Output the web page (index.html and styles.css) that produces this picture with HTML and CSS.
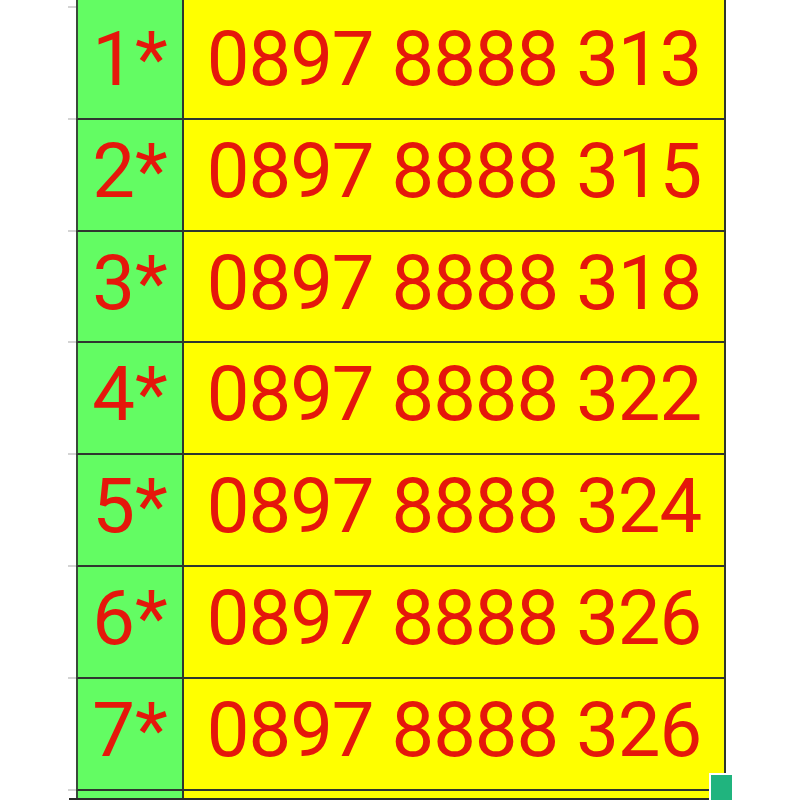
FILE: index.html
```html
<!DOCTYPE html>
<html>
<head>
<meta charset="utf-8">
<link rel="stylesheet" href="styles.css">
</head>
<body>
<div class="page">
  <div class="sheet">
    <div class="row stub-top"><div class="tick"></div><div class="num"></div><div class="phone"></div></div>
    <div class="row"><div class="tick"></div><div class="num">1*</div><div class="phone">0897 8888 313</div></div>
    <div class="row"><div class="tick"></div><div class="num">2*</div><div class="phone">0897 8888 315</div></div>
    <div class="row"><div class="tick"></div><div class="num">3*</div><div class="phone">0897 8888 318</div></div>
    <div class="row"><div class="tick"></div><div class="num">4*</div><div class="phone">0897 8888 322</div></div>
    <div class="row"><div class="tick"></div><div class="num">5*</div><div class="phone">0897 8888 324</div></div>
    <div class="row"><div class="tick"></div><div class="num">6*</div><div class="phone">0897 8888 326</div></div>
    <div class="row"><div class="tick"></div><div class="num">7*</div><div class="phone">0897 8888 326</div></div>
    <div class="row stub-bottom"><div class="tick"></div><div class="num"></div><div class="phone"></div></div>
    <div class="edge"></div>
  </div>
  <div class="handle"></div>
</div>
</body>
</html>
```

FILE: styles.css
```css
* { box-sizing: border-box; }
html, body { margin: 0; padding: 0; background: #ffffff; }
.page {
  position: relative;
  width: 800px;
  height: 800px;
  overflow: hidden;
  background: #ffffff;
}
.sheet {
  margin-left: 68px;
  display: flex;
  flex-direction: column;
}
.row {
  display: flex;
  height: 111.8px;
}
.row.stub-top { height: 8px; }
.row.stub-bottom { height: 7.4px; }
.row.stub-bottom .tick,
.row.stub-bottom .num,
.row.stub-bottom .phone { border-bottom: none; }
.tick {
  width: 8px;
  border-bottom: 2px solid #d4d4d4;
}
.num, .phone {
  font-family: Roboto, "Liberation Sans", sans-serif;
  font-size: 76px;
  line-height: 102px;
  padding-bottom: 7.8px;
  color: #e5170b;
  text-align: center;
  letter-spacing: -1px;
  white-space: nowrap;
  border-bottom: 2px solid #2f362f;
  border-right: 2px solid #2f362f;
}
.num {
  width: 108px;
  background: #63fc63;
  border-left: 2px solid #3a4a3a;
  letter-spacing: 0;
}
.phone {
  width: 542px;
  background: #ffff00;
}
.edge {
  margin-left: 1px;
  width: 641px;
  height: 2px;
  background: #2a2a2a;
}
.handle {
  position: absolute;
  left: 709px;
  top: 773px;
  width: 23px;
  height: 28px;
  background: #20b47e;
  border: 2px solid #ffffff;
  border-right: none;
  border-bottom: none;
}
```
